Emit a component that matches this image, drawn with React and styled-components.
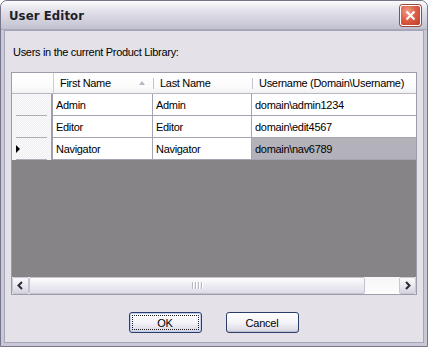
import React from 'react';
import styled, { createGlobalStyle } from 'styled-components';

const GlobalStyle = createGlobalStyle`
	html, body {
		margin: 0;
		padding: 0;
		background: #ffffff;
	}
	body {
		font-family: 'Liberation Sans', Arial, sans-serif;
		font-size: 11px;
		letter-spacing: -0.3px;
		color: #000;
	}
`;

const Window = styled.div`
	box-sizing: border-box;
	width: 428px;
	height: 347px;
	display: flex;
	flex-direction: column;
	background: #c9c8d6;
	border: 1px solid #76758a;
	border-radius: 7px 7px 0 0;
	overflow: hidden;
`;

const TitleBar = styled.div`
	height: 28px;
	display: flex;
	align-items: center;
	justify-content: space-between;
	padding: 0 6px 0 8px;
	background: linear-gradient(#fbfbfc 0%, #e9e8ef 25%, #d6d5e0 60%, #c2c1d1 100%);
	border-bottom: 1px solid #a9a8bb;
`;

const Title = styled.span`
	font-family: 'DejaVu Sans Condensed', 'DejaVu Sans', sans-serif;
	font-weight: bold;
	font-size: 13px;
	color: #1f1f2a;
	letter-spacing: 0.1px;
`;

const CloseButton = styled.div`
	width: 19px;
	height: 19px;
	border: 1px solid #fff;
	border-radius: 3px;
	background: radial-gradient(circle at 35% 30%, #f2a08c 0%, #de5f48 45%, #c33a27 100%);
	box-shadow: 0 0 0 1px #9a4a3e;
	display: flex;
	align-items: center;
	justify-content: center;
`;

const Client = styled.div`
	flex: 1;
	margin: 0 3px 3px 3px;
	background: #e4e1e8;
	border: 1px solid #a6a5b7;
	display: flex;
	flex-direction: column;
	padding: 0 6px;
`;

const Caption = styled.div`
	padding: 15px 0 0 2px;
	height: 26px;
`;

const Grid = styled.div`
	height: 221px;
	border: 1px solid #9d9cab;
	display: flex;
	flex-direction: column;
	background: #878488;
`;

const Row = styled.div`
	display: flex;
	height: ${(p) => p.$h}px;
	flex-shrink: 0;
`;

const widths = [41, 100, 99, 165];

const HeaderCell = styled.div`
	box-sizing: border-box;
	width: ${(p) => p.$w}px;
	background: linear-gradient(#ffffff, #fbfbfb 70%, #f1f1f3);
	border-bottom: 1px solid #b7b6c2;
	display: flex;
	align-items: center;
	padding-left: ${(p) => (p.$first ? 0 : 7)}px;
	position: relative;
	&:not(:first-child)::before {
		content: '';
		position: absolute;
		left: 0;
		top: 5px;
		height: 11px;
		border-left: 1px solid #c4c3cf;
	}
	&:nth-child(2)::before {
		top: 0;
		height: 100%;
		border-left: 1px solid #d0cfd8;
	}
`;

const SortArrow = styled.span`
	margin-left: auto;
	margin-right: 8px;
	width: 0;
	height: 0;
	border-left: 3px solid transparent;
	border-right: 3px solid transparent;
	border-bottom: 4px solid #b8b7c2;
`;

const RowHeader = styled.div`
	box-sizing: border-box;
	width: ${widths[0]}px;
	border-right: 2px solid #9f9eaa;
	background-color: #f7f6f9;
	background-image: repeating-conic-gradient(#efeef3 0 25%, #fbfbfc 0 50%);
	background-size: 2px 2px;
	position: relative;
	display: flex;
	align-items: center;
	padding-left: 4px;
	&::after {
		content: '';
		position: absolute;
		left: 4px;
		right: 4px;
		bottom: 0;
		border-bottom: 1px solid #aeadb9;
	}
`;

const Cell = styled.div`
	box-sizing: border-box;
	width: ${(p) => p.$w}px;
	background: ${(p) => (p.$selected ? '#b3b2ba' : '#ffffff')};
	border-right: 1px solid #a5a4b0;
	border-bottom: 1px solid #a5a4b0;
	display: flex;
	align-items: center;
	padding-left: 3px;
	&:last-child {
		border-right: none;
		flex: 1;
	}
`;

const Workspace = styled.div`
	flex: 1;
`;

const ScrollBar = styled.div`
	height: 17px;
	display: flex;
	background: #fbfbfc;
	flex-shrink: 0;
`;

const ScrollButton = styled.div`
	box-sizing: border-box;
	width: 17px;
	height: 17px;
	border: 1px solid #c8c7d3;
	border-radius: 2px;
	background: linear-gradient(#fbfbfd, #e6e5ed 60%, #d5d4df);
	display: flex;
	align-items: center;
	justify-content: center;
`;

const Thumb = styled.div`
	box-sizing: border-box;
	width: 336px;
	height: 17px;
	border: 1px solid #c4c3cf;
	border-radius: 2px;
	background: linear-gradient(#fdfdfe, #eceaf1 55%, #dedde6);
	display: flex;
	align-items: center;
	justify-content: center;
	gap: 1px;
`;

const Grip = styled.span`
	width: 1px;
	height: 7px;
	background: #b9b8c5;
	box-shadow: 1px 0 0 #fff;
	margin-right: 1px;
`;

const Track = styled.div`
	flex: 1;
	background: linear-gradient(#f6f6f8, #fdfdfe);
`;

const Footer = styled.div`
	flex: 1;
	display: flex;
	justify-content: center;
	align-items: flex-start;
	gap: 24px;
	padding-top: 17px;
	padding-right: 1px;
`;

const Button = styled.button`
	box-sizing: border-box;
	width: 73px;
	height: 21px;
	font-family: 'Liberation Sans', Arial, sans-serif;
	font-size: 11px;
	letter-spacing: -0.2px;
	color: #000;
	border: 1px solid #2c3d6b;
	border-radius: 3px;
	background: linear-gradient(#ffffff, #f4f3f7 50%, #dddce6 90%, #c9c8d6);
	box-shadow: ${(p) =>
		p.$default ? 'inset 0 0 0 1px #bdd0f0' : 'inset 0 -1px 0 #c4c3d2'};
	padding: 0;
	position: relative;
	&::after {
		content: '';
		display: ${(p) => (p.$default ? 'block' : 'none')};
		position: absolute;
		inset: 2px;
		border: 1px dotted #222;
	}
`;

const users = [
	{ first: 'Admin', last: 'Admin', user: 'domain\\admin1234' },
	{ first: 'Editor', last: 'Editor', user: 'domain\\edit4567' },
	{ first: 'Navigator', last: 'Navigator', user: 'domain\\nav6789', current: true },
];

const Chevron = ({ dir }) => (
	<svg width="7" height="9" viewBox="0 0 7 9">
		<path
			d={dir === 'left' ? 'M5 1 L1.5 4.5 L5 8' : 'M2 1 L5.5 4.5 L2 8'}
			fill="none"
			stroke="#2b2b33"
			strokeWidth="2"
		/>
	</svg>
);

export default function App() {
	return (
		<>
			<GlobalStyle />
			<Window>
				<TitleBar>
					<Title>User Editor</Title>
					<CloseButton>
						<svg width="11" height="11" viewBox="0 0 11 11">
							<path d="M1.5 1.5 L9.5 9.5 M9.5 1.5 L1.5 9.5" stroke="#fff" strokeWidth="2" />
						</svg>
					</CloseButton>
				</TitleBar>
				<Client>
					<Caption>Users in the current Product Library:</Caption>
					<Grid>
						<Row $h={21}>
							<HeaderCell $w={widths[0]} $first />
							<HeaderCell $w={widths[1]}>
								First Name
								<SortArrow />
							</HeaderCell>
							<HeaderCell $w={widths[2]}>Last Name</HeaderCell>
							<HeaderCell $w={widths[3]} style={{ flex: 1 }}>
								Username (Domain\Username)
							</HeaderCell>
						</Row>
						{users.map((u) => (
							<Row $h={22} key={u.user}>
								<RowHeader>
									{u.current && (
										<svg width="5" height="8" viewBox="0 0 5 8">
											<path d="M0 0 L4 4 L0 8 Z" fill="#000" />
										</svg>
									)}
								</RowHeader>
								<Cell $w={widths[1]}>{u.first}</Cell>
								<Cell $w={widths[2]}>{u.last}</Cell>
								<Cell $w={widths[3]} $selected={u.current}>
									{u.user}
								</Cell>
							</Row>
						))}
						<Workspace />
						<ScrollBar>
							<ScrollButton>
								<Chevron dir="left" />
							</ScrollButton>
							<Thumb>
								<Grip />
								<Grip />
								<Grip />
								<Grip />
							</Thumb>
							<Track />
							<ScrollButton>
								<Chevron dir="right" />
							</ScrollButton>
						</ScrollBar>
					</Grid>
					<Footer>
						<Button $default>OK</Button>
						<Button>Cancel</Button>
					</Footer>
				</Client>
			</Window>
		</>
	);
}
